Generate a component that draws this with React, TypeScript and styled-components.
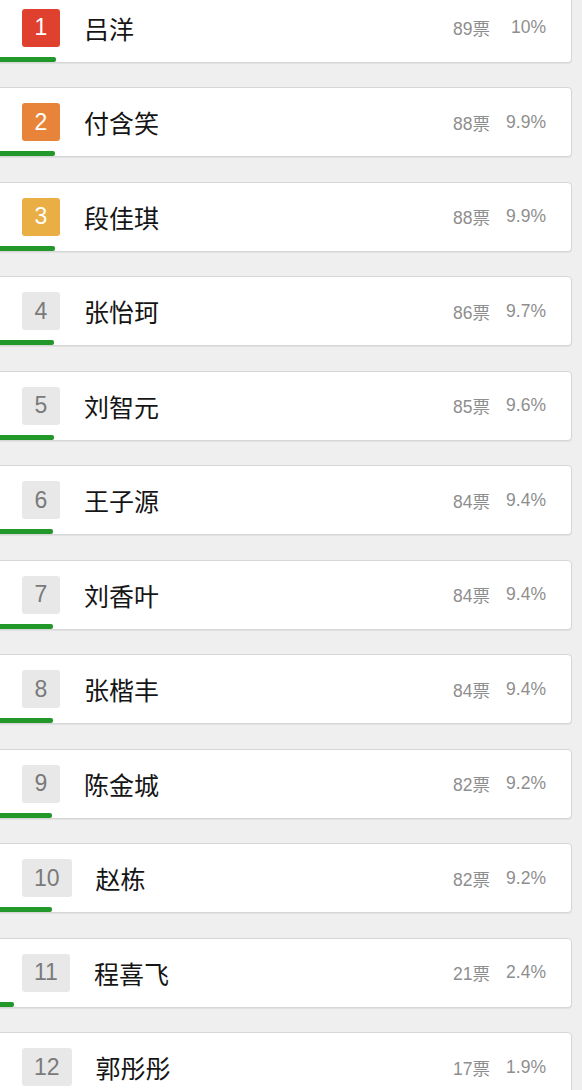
import React from 'react'
import styled, { createGlobalStyle } from 'styled-components'

const GlobalStyle = createGlobalStyle`
  html, body {
    margin: 0;
    padding: 0;
    background: #efefef;
    font-family: "Liberation Sans", "Noto Sans CJK SC", sans-serif;
    overflow: hidden;
  }
`

type Entry = { name: string; votes: number; pct: string }

const entries: Entry[] = [
  { name: '吕洋', votes: 89, pct: '10' },
  { name: '付含笑', votes: 88, pct: '9.9' },
  { name: '段佳琪', votes: 88, pct: '9.9' },
  { name: '张怡珂', votes: 86, pct: '9.7' },
  { name: '刘智元', votes: 85, pct: '9.6' },
  { name: '王子源', votes: 84, pct: '9.4' },
  { name: '刘香叶', votes: 84, pct: '9.4' },
  { name: '张楷丰', votes: 84, pct: '9.4' },
  { name: '陈金城', votes: 82, pct: '9.2' },
  { name: '赵栋', votes: 82, pct: '9.2' },
  { name: '程喜飞', votes: 21, pct: '2.4' },
  { name: '郭彤彤', votes: 17, pct: '1.9' },
]

const rankColors: Record<number, string> = {
  1: '#e0412f',
  2: '#e8843a',
  3: '#e9ae44',
}

const List = styled.div`
  display: flex;
  flex-direction: column;
  gap: 24.5px;
  margin: -7.5px 10px 0 -1px;
`

const Card = styled.div`
  position: relative;
  height: 70px;
  box-sizing: border-box;
  background: #fff;
  border: 1px solid #d6d6d6;
  border-radius: 0 4px 4px 0;
  box-shadow: 0 1px 1px rgba(0, 0, 0, 0.06);
  display: flex;
  align-items: center;
  padding: 0 25px 0 22px;
  overflow: hidden;
`

const Badge = styled.div<{ $rank: number }>`
  min-width: 38px;
  height: 38px;
  box-sizing: border-box;
  padding: 0 12px;
  border-radius: 3px;
  display: flex;
  align-items: center;
  justify-content: center;
  font-size: 23px;
  background: ${({ $rank }) => rankColors[$rank] ?? '#e8e8e8'};
  color: ${({ $rank }) => (rankColors[$rank] ? '#fff' : '#7a7a7a')};
`

const Name = styled.div`
  margin-left: 24px;
  flex: 1;
  font-family: "Noto Sans CJK SC", sans-serif;
  font-size: 25px;
  color: #151515;
`

const Votes = styled.div`
  font-size: 17.5px;
  color: #8e8e8e;
`

const Percent = styled.div`
  width: 56px;
  text-align: right;
  font-size: 17.5px;
  color: #8e8e8e;
`

const Bar = styled.div`
  position: absolute;
  left: 0;
  bottom: 0;
  height: 5px;
  background: #23982a;
  border-radius: 0 2px 2px 0;
`

export default function App() {
  return (
    <>
      <GlobalStyle />
      <List>
        {entries.map((e, i) => (
          <Card key={e.name}>
            <Badge $rank={i + 1}>{i + 1}</Badge>
            <Name>{e.name}</Name>
            <Votes>{e.votes}票</Votes>
            <Percent>{e.pct}%</Percent>
            <Bar style={{ width: `${parseFloat(e.pct) * 5.5 + 1}px` }} />
          </Card>
        ))}
      </List>
    </>
  )
}
